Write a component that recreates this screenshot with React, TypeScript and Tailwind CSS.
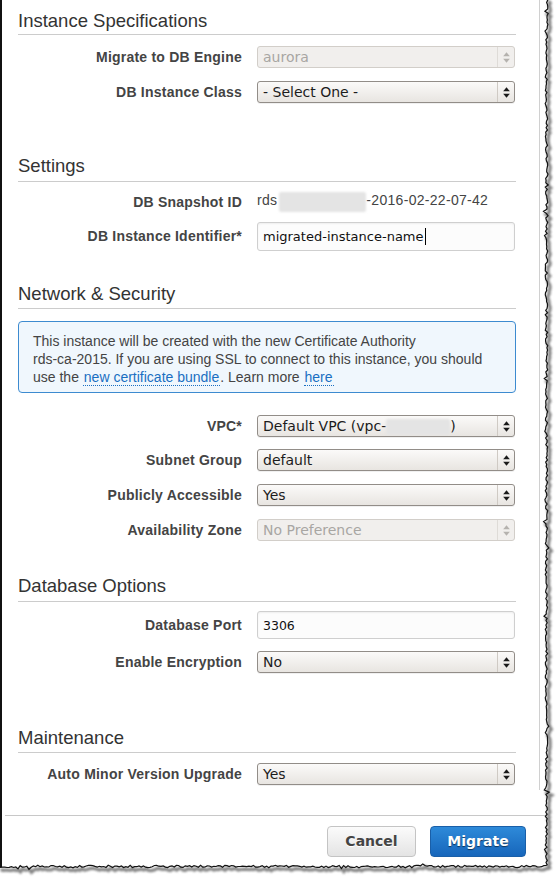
import React from "react";

const SANS = "font-['Liberation_Sans',Arial,sans-serif]";
const DJ = "font-['DejaVu_Sans',Verdana,sans-serif]";

function makeRand(seed: number) {
  let s = seed;
  return () => {
    s = (s * 1103515245 + 12345) % 2147483648;
    return s / 2147483648;
  };
}

function tornPath(): string {
  const r = makeRand(7);
  const pts: string[] = [];
  for (let y = -2; y <= 866; y += 2.2) {
    const spike = r() < 0.08 ? (r() - 0.5) * 4 : 0;
    const x = 546.5 + (r() - 0.5) * 2.4 + spike;
    pts.push(`${x.toFixed(1)},${y.toFixed(1)}`);
  }
  for (let x = 546; x >= -2; x -= 2.2) {
    const spike = r() < 0.08 ? (r() - 0.5) * 4 : 0;
    const y = 866.5 + (r() - 0.5) * 2.4 + spike;
    pts.push(`${x.toFixed(1)},${y.toFixed(1)}`);
  }
  return "M" + pts.join(" L");
}

const TORN = tornPath();

function Arrows({ disabled }: { disabled?: boolean }) {
  const c = disabled ? "#b5b2ae" : "#1a1a1a";
  return (
    <svg width="7" height="11" viewBox="0 0 7 11">
      <path d="M3.5 0.3 L6.8 4.2 L0.2 4.2 Z" fill={c} />
      <path d="M0.2 6.8 L6.8 6.8 L3.5 10.7 Z" fill={c} />
    </svg>
  );
}

function Select({
  value,
  disabled,
  children,
}: {
  value?: string;
  disabled?: boolean;
  children?: React.ReactNode;
}) {
  return (
    <div
      className={
        disabled
          ? `flex h-[22px] w-[258px] items-center rounded-[3px] border border-[#d2cec9] bg-[#f1efed] ${DJ} text-[14px] text-[#a8a6a3]`
          : `flex h-[22px] w-[258px] items-center rounded-[3px] border border-[#928d88] bg-gradient-to-b from-[#fbfaf9] to-[#e8e5e1] ${DJ} text-[14px] text-[#1c1c1c] shadow-[0_1px_0_rgba(0,0,0,0.06)]`
      }
    >
      <div className="flex flex-1 items-center overflow-hidden whitespace-nowrap pl-[5px] leading-[20px]">
        {children ?? value}
      </div>
      <div
        className={
          disabled
            ? "flex h-[20px] w-[17px] items-center justify-center border-l border-[#dedbd7]"
            : "flex h-[20px] w-[17px] items-center justify-center border-l border-[#cfcac4]"
        }
      >
        <Arrows disabled={disabled} />
      </div>
    </div>
  );
}

function Row({
  label,
  className,
  children,
}: {
  label: string;
  className: string;
  children: React.ReactNode;
}) {
  return (
    <div className={`flex items-center ${className}`}>
      <div
        className={`w-[224px] text-right ${SANS} text-[14px] font-bold tracking-[0.22px] text-[#444]`}
      >
        {label}
      </div>
      <div className="ml-[15px]">{children}</div>
    </div>
  );
}

function Heading({ text, className }: { text: string; className: string }) {
  return (
    <div
      className={`border-b border-[#cccccc] ${SANS} text-[18.5px] leading-[22px] text-[#333] ${className}`}
    >
      {text}
    </div>
  );
}

function Blur({ w, h }: { w: number; h: number }) {
  return (
    <span
      className="inline-block rounded-[2px] bg-[#e4e4e4] align-middle blur-[1px]"
      style={{ width: w, height: h }}
    />
  );
}

export default function App() {
  return (
    <div className="relative h-[880px] w-[558px] overflow-hidden bg-white">
      <div className="flex h-[867px] w-[547px] flex-col border-l-2 border-[#111]">
        <div className="h-[790px] w-[538px] border-r border-[#d0d0d0] pl-4 pr-[23px]">
          {/* Instance Specifications */}
          <Heading text="Instance Specifications" className="mt-[10px] pb-[2px]" />
          <Row label="Migrate to DB Engine" className="mt-[11px]">
            <Select value="aurora" disabled />
          </Row>
          <Row label="DB Instance Class" className="mt-[13px]">
            <Select value="- Select One -" />
          </Row>

          {/* Settings */}
          <Heading text="Settings" className="mt-[52px] pb-[4px]" />
          <Row label="DB Snapshot ID" className="mt-[9px] h-[22px]">
            <div
              className={`-mt-[2px] flex items-center ${SANS} text-[14px] tracking-[0.3px] text-[#444]`}
            >
              <span>rds</span>
              <span className="ml-[2px]">
                <Blur w={87} h={20} />
              </span>
              <span>-2016-02-22-07-42</span>
            </div>
          </Row>
          <Row label="DB Instance Identifier*" className="mt-[9px]">
            <div
              className={`flex h-[29px] w-[258px] items-center rounded-[3px] border border-[#cfcfcf] bg-[#fcfcfc] pl-[5px] ${DJ} text-[13px] text-[#111] shadow-[inset_0_1px_2px_rgba(0,0,0,0.06)]`}
            >
              <span>migrated-instance-name</span>
              <span className="ml-[1px] h-[17px] w-px bg-black" />
            </div>
          </Row>

          {/* Network & Security */}
          <Heading text="Network & Security" className="mt-[32px] pb-[3px]" />
          <div
            className={`mt-[12px] h-[72px] rounded-[4px] border border-[#3d8bd0] bg-[#f0f7fd] pb-[6px] pl-[14px] pt-[10px] ${SANS} text-[14px] leading-[18px] text-[#444]`}
          >
            This instance will be created with the new Certificate Authority
            <br />
            rds-ca-2015. If you are using SSL to connect to this instance, you should
            <br />
            use the{" "}
            <span className="border-b border-dotted border-[#1a6fc2] px-[1px] text-[#1a6fc2]">
              new certificate bundle
            </span>
            . Learn more{" "}
            <span className="border-b border-dotted border-[#1a6fc2] px-[1px] text-[#1a6fc2]">
              here
            </span>
          </div>
          <Row label="VPC*" className="mt-[22px]">
            <Select>
              <span>Default VPC (vpc-</span>
              <span>
                <Blur w={64} h={16} />
              </span>
              <span>)</span>
            </Select>
          </Row>
          <Row label="Subnet Group" className="mt-[12px]">
            <Select value="default" />
          </Row>
          <Row label="Publicly Accessible" className="mt-[13px]">
            <Select value="Yes" />
          </Row>
          <Row label="Availability Zone" className="mt-[13px]">
            <Select value="No Preference" disabled />
          </Row>

          {/* Database Options */}
          <Heading text="Database Options" className="mt-[34px] pb-[4px]" />
          <Row label="Database Port" className="mt-[9px]">
            <div
              className={`flex h-[28px] w-[258px] items-center rounded-[3px] border border-[#cfcfcf] bg-[#fcfcfc] pl-[5px] pt-[3px] ${DJ} text-[12.5px] text-[#111] shadow-[inset_0_1px_2px_rgba(0,0,0,0.06)]`}
            >
              3306
            </div>
          </Row>
          <Row label="Enable Encryption" className="mt-[12px]">
            <Select value="No" />
          </Row>

          {/* Maintenance */}
          <Heading text="Maintenance" className="mt-[54px] pb-[3px]" />
          <Row label="Auto Minor Version Upgrade" className="mt-[10px]">
            <Select value="Yes" />
          </Row>
        </div>

        <div className="ml-[3px] mt-[25px] flex justify-end gap-[14px] border-t border-[#c8c8c8] pr-[21px] pt-[10px]">
          <button
            className={`h-[31px] w-[89px] rounded-[4px] border border-[#c4c4c4] bg-gradient-to-b from-[#fbfbfb] to-[#e4e4e4] ${DJ} text-[14px] font-bold text-[#444] [text-shadow:0_1px_0_#fff]`}
          >
            Cancel
          </button>
          <button
            className={`h-[31px] w-[96px] rounded-[4px] border border-[#1a5fa8] bg-gradient-to-b from-[#2e8ad9] to-[#1766bb] ${DJ} text-[14px] font-bold text-white [text-shadow:0_1px_1px_rgba(0,0,0,0.55)]`}
          >
            Migrate
          </button>
        </div>
      </div>

      <svg
        className="pointer-events-none absolute left-0 top-0"
        width="558"
        height="880"
        viewBox="0 0 558 880"
      >
        <defs>
          <filter id="sh" x="-5%" y="-5%" width="110%" height="110%">
            <feGaussianBlur stdDeviation="1.2" />
          </filter>
        </defs>
        <path d={TORN + " L-10,890 L570,890 L570,-10 Z"} fill="#ffffff" stroke="none" />
        <path
          d={TORN}
          fill="none"
          stroke="#5a5a5a"
          strokeWidth="3.2"
          opacity="0.75"
          transform="translate(2.5,3)"
          filter="url(#sh)"
        />
        <path d={TORN} fill="none" stroke="#111" strokeWidth="1.2" />
      </svg>
    </div>
  );
}
